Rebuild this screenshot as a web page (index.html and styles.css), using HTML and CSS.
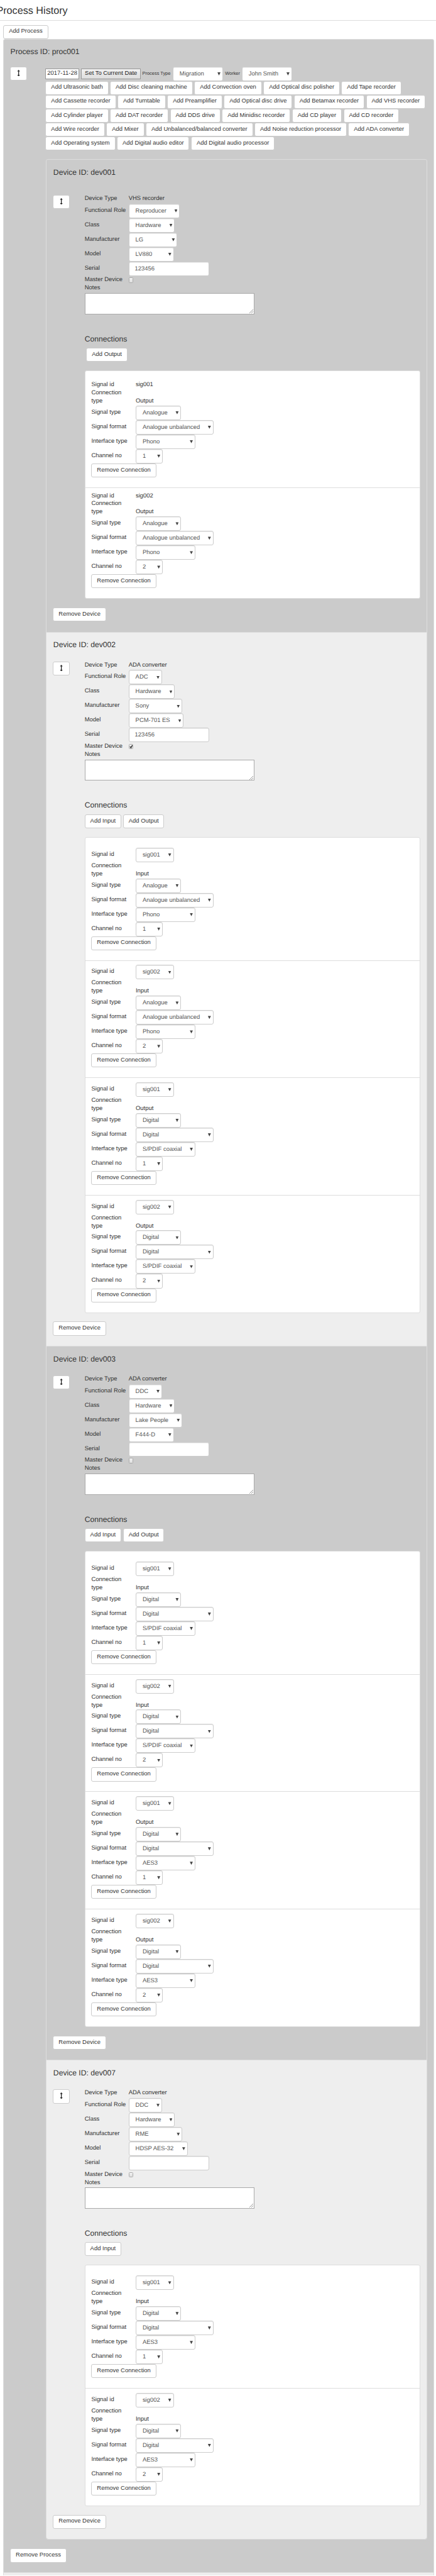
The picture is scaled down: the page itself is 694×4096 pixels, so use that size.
FILE: index.html
```html
<!DOCTYPE html>
<html lang="en">
<head>
<meta charset="utf-8">
<title>Process History</title>
<link rel="stylesheet" href="styles.css">
</head>
<body>
<main class="page">
  <h1 class="page-title">Process History</h1>
  <div class="toolbar"><button class="btn">Add Process</button></div>
  <section class="process">
    <h2 class="heading process-heading">Process ID: proc001</h2>
    <div class="process-top">
      <button class="btn handle" aria-label="Move"><svg class="arrows" viewBox="0 0 6 13"><path d="M3 0 5.7 3H3.8V10H5.7L3 13 .3 10H2.2V3H.3z"/></svg></button>
      <div class="process-fields">
        <div class="process-row">
          <span class="date">2017-11-28</span><button class="native">Set To Current Date</button><span class="mini type-label">Process Type</span><span class="select w-main">Migration</span><span class="mini worker-label">Worker</span><span class="select w-main">John Smith</span>
        </div>
        <div class="add-list">
          <button class="btn">Add Ultrasonic bath</button>
          <button class="btn">Add Disc cleaning machine</button>
          <button class="btn">Add Convection oven</button>
          <button class="btn">Add Optical disc polisher</button>
          <button class="btn">Add Tape recorder</button>
          <button class="btn">Add Cassette recorder</button>
          <button class="btn">Add Turntable</button>
          <button class="btn">Add Preamplifier</button>
          <button class="btn">Add Optical disc drive</button>
          <button class="btn">Add Betamax recorder</button>
          <button class="btn">Add VHS recorder</button>
          <button class="btn">Add Cylinder player</button>
          <button class="btn">Add DAT recorder</button>
          <button class="btn">Add DDS drive</button>
          <button class="btn">Add Minidisc recorder</button>
          <button class="btn">Add CD player</button>
          <button class="btn">Add CD recorder</button>
          <button class="btn">Add Wire recorder</button>
          <button class="btn">Add Mixer</button>
          <button class="btn">Add Unbalanced/balanced converter</button>
          <button class="btn">Add Noise reduction processor</button>
          <button class="btn">Add ADA converter</button>
          <button class="btn">Add Operating system</button>
          <button class="btn">Add Digital audio editor</button>
          <button class="btn">Add Digital audio processor</button>
        </div>
      </div>
    </div>
    <div class="devices" id="devices"></div>
    <div class="process-footer"><button class="btn">Remove Process</button></div>
  </section>
  <section class="next-process"></section>
</main>
<script src="app.js"></script>
</body>
</html>
```
FILE: styles.css
```css
* { box-sizing: border-box; }
/* 1rem is one design unit */
html { font-size: 0.75px; }
body {
  margin: 0;
  background: #fff;
  color: #333;
  font-family: "Liberation Sans", Arial, sans-serif;
  font-size: 12.6rem;
  line-height: 17.2rem;
  text-rendering: geometricPrecision;
}
.page { width: 100%; height: 5460rem; overflow: hidden; }
.page-title {
  margin: 0;
  height: 44rem;
  padding-top: 10rem;
  border-bottom: 1px solid #ddd;
  font-size: 21.6rem;
  font-weight: 400;
  line-height: 25rem;
  text-indent: -7.5rem;
  white-space: nowrap;
}
.toolbar { height: 38rem; padding: 8.7rem 0 0 7rem; }
.btn {
  display: inline-flex;
  align-items: center;
  justify-content: center;
  height: 29.5rem;
  padding: 0 10.5rem 2rem;
  border: 1px solid #ccc;
  border-radius: 4rem;
  background: #fff;
  color: #333;
  font: inherit;
  white-space: nowrap;
}
.heading { margin: 0; font-size: 16.2rem; font-weight: 400; line-height: 18rem; }
.process {
  width: 914rem;
  height: 5372.5rem;
  margin-left: 7.3rem;
  border: 1px solid #ddd;
  border-radius: 4rem 4rem 0 0;
  background: #cbcbcb;
}
.next-process {
  width: 914rem;
  height: 5.5rem;
  margin-left: 7.3rem;
  border: solid #ddd;
  border-width: 0 1px;
  background: #eee;
}
.process-heading { height: 58rem; padding: 18rem 0 0 13.5rem; }
.process-top { display: flex; height: 196.3rem; padding-left: 13rem; }
.handle { width: 36rem; padding: 0 0 3rem; }
.arrows { display: block; width: 7rem; height: 14rem; fill: #222; }
.process-fields { width: 812rem; margin-left: 39rem; }
.process-row { display: flex; align-items: center; height: 30rem; }
.date {
  width: 72rem;
  height: 22.6rem;
  padding-left: 2.5rem;
  border: 1px solid #999;
  background: #fff;
  line-height: 19rem;
}
.native {
  width: 126rem;
  height: 22.6rem;
  margin-left: 4rem;
  padding: 0 0 2rem;
  border: 1px solid #999;
  background: linear-gradient(#f2f2f2, #ddd);
  color: #222;
  font: inherit;
  white-space: nowrap;
}
.mini { font-size: 9.9rem; white-space: nowrap; }
.type-label { width: 64.5rem; margin-left: 3.5rem; }
.worker-label { width: 35.5rem; margin-left: 4.3rem; }
.add-list { display: flex; flex-wrap: wrap; column-gap: 3.4rem; }

.select, .input {
  position: relative;
  display: block;
  height: 30.7rem;
  padding-left: 13.2rem;
  border: 1px solid #ccc;
  border-radius: 4rem;
  background: #fff;
  box-shadow: inset 0 1px 1px rgba(0, 0, 0, 0.075);
  color: #555;
  line-height: 29rem;
  white-space: nowrap;
}
.select::after {
  content: "";
  position: absolute;
  top: 11rem;
  right: 4rem;
  width: 6.5rem;
  height: 6.5rem;
  background: #444;
  clip-path: polygon(0 0, 100% 0, 50% 100%);
}
.w-main { width: 106.7rem; }
.input { width: 171rem; padding-left: 11.7rem; }

.devices {
  width: 810rem;
  margin-left: 88.7rem;
  border: 1px solid #ddd;
  border-radius: 4rem;
}
.device { border-bottom: 1px solid #ddd; }
.device:last-child { border-bottom: 0; border-radius: 0 0 4rem 4rem; }
.device:nth-child(even) { background: #eee; }
.device-heading { height: 61.3rem; padding: 18rem 0 0 14.5rem; }
.device-body { display: flex; padding-left: 14rem; }
.device:first-child .device-body { padding-top: 13.3rem; }
.device-main { width: 713rem; margin-left: 31rem; }
.field { display: flex; height: 17.2rem; }
.field-label { flex: none; width: 93.3rem; white-space: nowrap; }
.field.type { height: 18rem; }
.field.master { margin-top: 1rem; }
.field.control { height: 30.7rem; }
.field.control .field-label { line-height: 28.5rem; }
.field.double { height: 34.4rem; align-items: flex-end; }
.check {
  display: flex;
  width: 10rem;
  height: 11rem;
  margin-top: 2.5rem;
  border: 1px solid #aaa;
  border-radius: 2rem;
  background: linear-gradient(#f2f2f2, #ddd);
}
.check svg { width: 8rem; height: 8.5rem; fill: none; stroke: #222; stroke-width: 2; }
.notes {
  position: relative;
  width: 360rem;
  height: 45rem;
  margin-top: 1rem;
  border: 1px solid #a9a9a9;
  background: #fff;
}
.grip { position: absolute; right: 1rem; bottom: 1rem; width: 8rem; height: 8rem; stroke: #777; fill: none; }
.conn-heading { height: 71rem; padding-top: 44rem; }
.conn-actions { display: flex; gap: 4rem; height: 48rem; }
.device:first-child .conn-actions { padding-left: 3.5rem; }
.connections {
  border: 1px solid #ddd;
  border-radius: 4rem;
  background: #fff;
}
.connection {
  padding: 9rem 0 21.2rem 13rem;
  border-bottom: 1px solid #ddd;
}
.connection:first-child { padding-top: 21.3rem; }
.connection:last-child { border-bottom: 0; }
.connection .field-label { width: 94rem; }
.connection .btn { display: flex; }
.device-footer { height: 70.2rem; padding: 18.5rem 0 0 14rem; }
.process-footer { padding: 18.7rem 0 0 13rem; }
```
FILE: app.js
```js
const devices = [
  {
    id: "dev001", type: "VHS recorder", role: ["Reproducer", 109], maker: ["LG", 103.5], model: ["LV880", 96],
    serial: "123456", actions: ["Add Output"], fixedSignal: true,
    connections: [
      ["sig001", "Output", "Analogue", "Analogue unbalanced", "Phono", "1"],
      ["sig002", "Output", "Analogue", "Analogue unbalanced", "Phono", "2"]
    ]
  },
  {
    id: "dev002", type: "ADA converter", role: ["ADC", 71], maker: ["Sony", 114], model: ["PCM-701 ES", 117],
    serial: "123456", master: true, actions: ["Add Input", "Add Output"],
    connections: [
      ["sig001", "Input", "Analogue", "Analogue unbalanced", "Phono", "1"],
      ["sig002", "Input", "Analogue", "Analogue unbalanced", "Phono", "2"],
      ["sig001", "Output", "Digital", "Digital", "S/PDIF coaxial", "1"],
      ["sig002", "Output", "Digital", "Digital", "S/PDIF coaxial", "2"]
    ]
  },
  {
    id: "dev003", type: "ADA converter", role: ["DDC", 71], maker: ["Lake People", 114], model: ["F444-D", 96],
    serial: "", actions: ["Add Input", "Add Output"],
    connections: [
      ["sig001", "Input", "Digital", "Digital", "S/PDIF coaxial", "1"],
      ["sig002", "Input", "Digital", "Digital", "S/PDIF coaxial", "2"],
      ["sig001", "Output", "Digital", "Digital", "AES3", "1"],
      ["sig002", "Output", "Digital", "Digital", "AES3", "2"]
    ]
  },
  {
    id: "dev007", type: "ADA converter", role: ["DDC", 71], maker: ["RME", 114], model: ["HDSP AES-32", 125.5],
    serial: "", actions: ["Add Input"],
    connections: [
      ["sig001", "Input", "Digital", "Digital", "AES3", "1"],
      ["sig002", "Input", "Digital", "Digital", "AES3", "2"]
    ]
  }
];

const select = (text, width) => `<span class="select" style="width:${width}rem">${text}</span>`;
const field = (label, value, kind = "") =>
  `<div class="field ${kind}"><span class="field-label">${label}</span>${value}</div>`;
const button = (text) => `<button class="btn">${text}</button>`;
const arrows = document.querySelector(".handle").outerHTML;
const tick = `<svg viewBox="0 0 8 9"><path d="M1.5 4.5 3.5 7 7 1"/></svg>`;

function connection([signal, kind, type, format, port, channel], fixedSignal) {
  return `<div class="connection">
    ${fixedSignal ? field("Signal id", `<span>${signal}</span>`) : field("Signal id", select(signal, 80.7), "control")}
    ${field("Connection<br>type", `<span>${kind}</span>`, "double")}
    ${field("Signal type", select(type, 96.5), "control")}
    ${field("Signal format", select(format, 165), "control")}
    ${field("Interface type", select(port, 126.7), "control")}
    ${field("Channel no", select(channel, 57.5), "control")}
    ${button("Remove Connection")}
  </div>`;
}

function device(d) {
  return `<article class="device">
    <h2 class="heading device-heading">Device ID: ${d.id}</h2>
    <div class="device-body">
      ${arrows}
      <div class="device-main">
        ${field("Device Type", `<span>${d.type}</span>`, "type")}
        ${field("Functional Role", select(...d.role), "control")}
        ${field("Class", select("Hardware", 98.3), "control")}
        ${field("Manufacturer", select(...d.maker), "control")}
        ${field("Model", select(...d.model), "control")}
        ${field("Serial", `<span class="input">${d.serial}</span>`, "control")}
        ${field("Master Device", `<span class="check">${d.master ? tick : ""}</span>`, "master")}
        ${field("Notes", "")}
        <div class="notes"><svg class="grip" viewBox="0 0 8 8"><path d="M0 8 8 0M4 8 8 4"/></svg></div>
        <h3 class="heading conn-heading">Connections</h3>
        <div class="conn-actions">${d.actions.map(button).join("")}</div>
        <div class="connections">${d.connections.map((c) => connection(c, d.fixedSignal)).join("")}</div>
      </div>
    </div>
    <div class="device-footer">${button("Remove Device")}</div>
  </article>`;
}

document.getElementById("devices").innerHTML = devices.map(device).join("");
```
